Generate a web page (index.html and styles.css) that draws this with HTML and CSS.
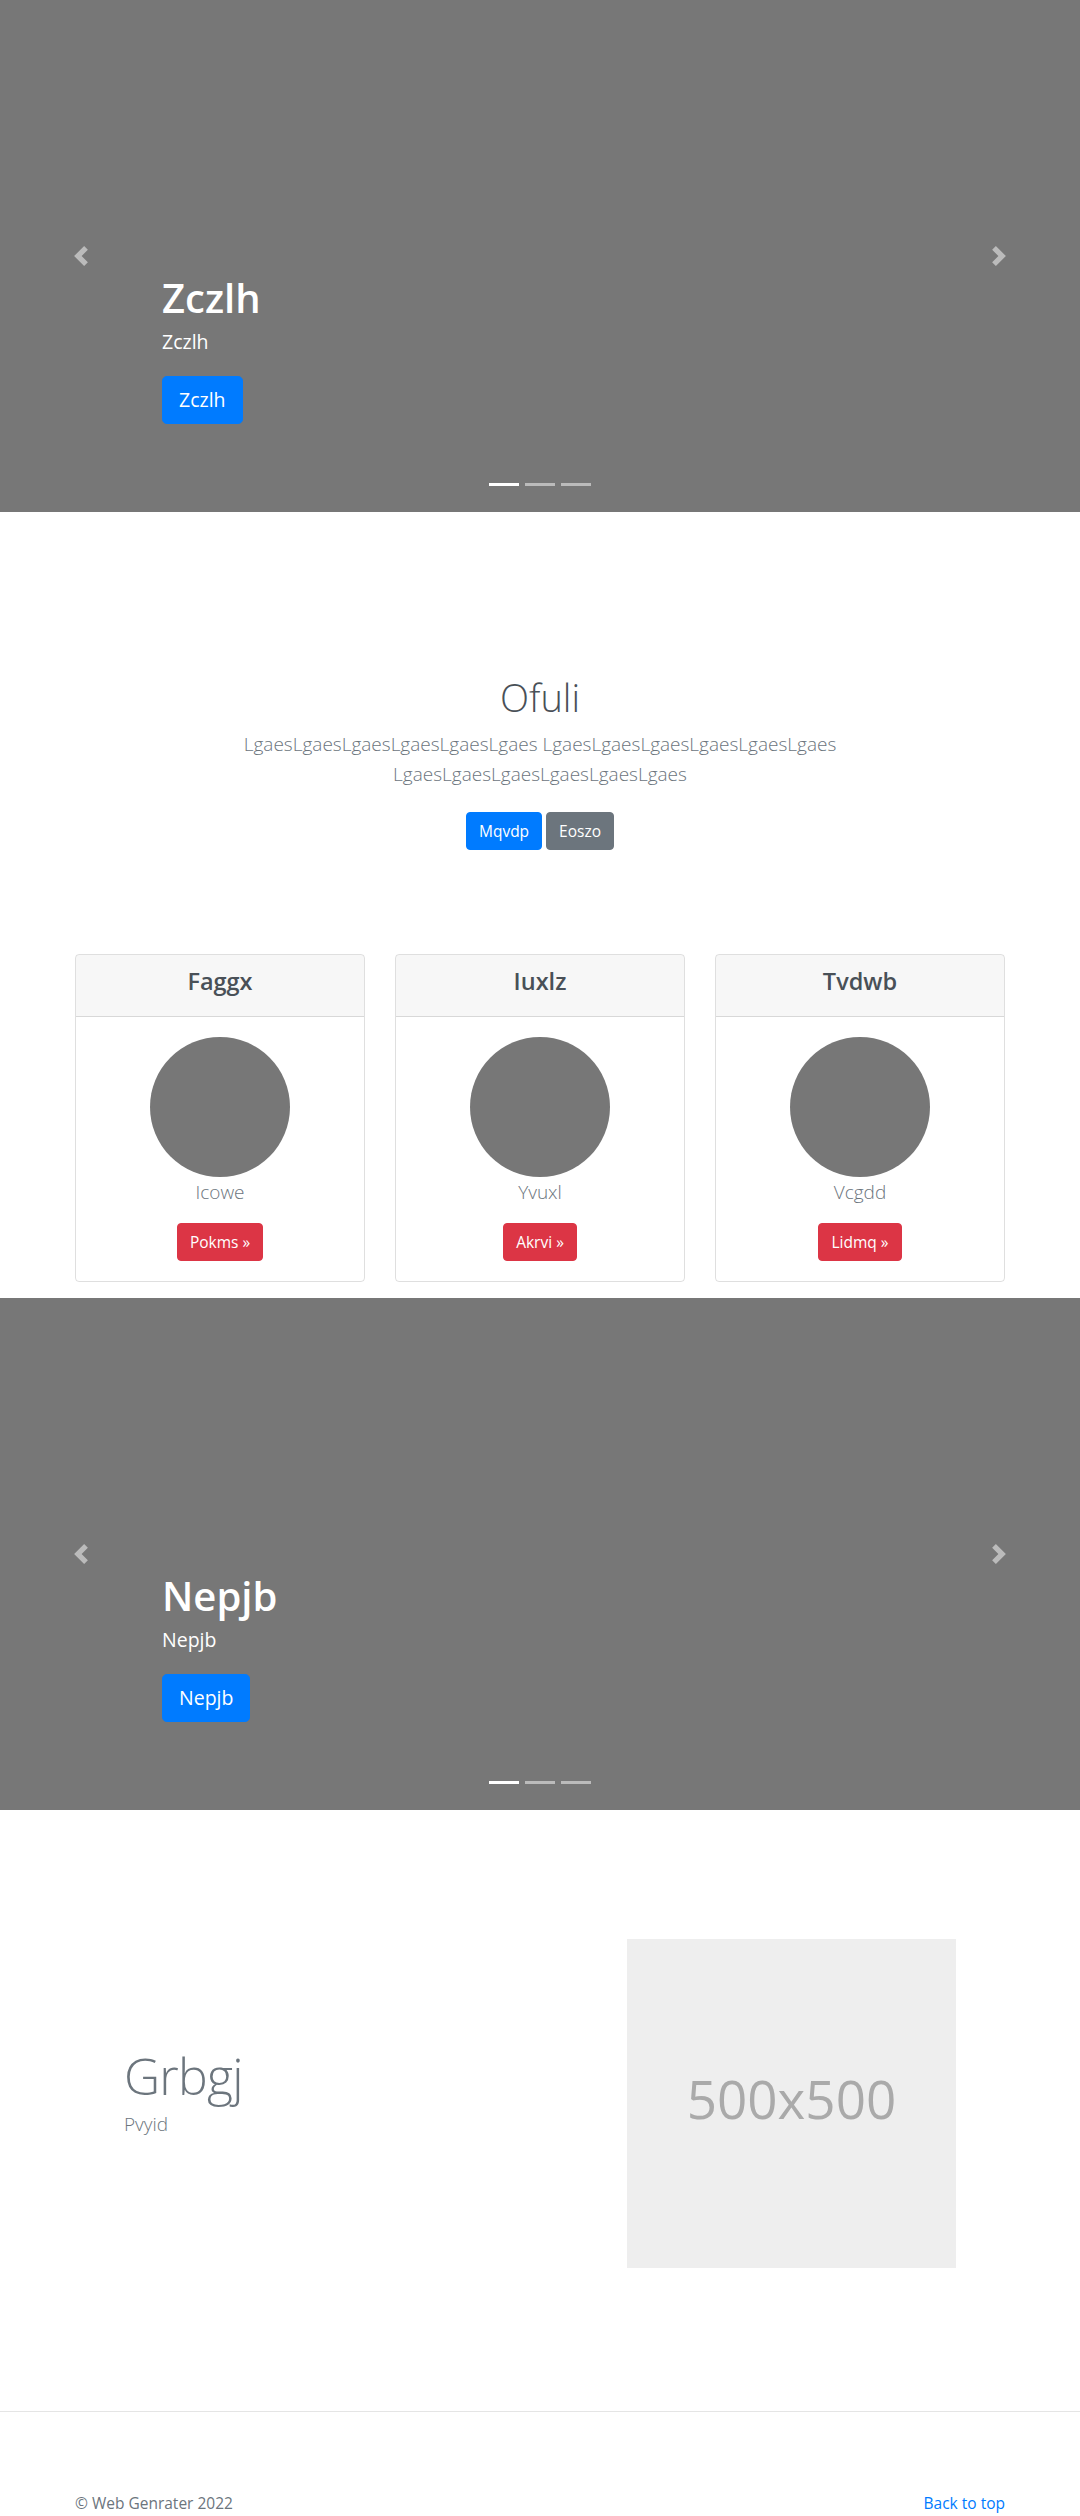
FILE: index.html
```html
<!DOCTYPE html>
<html lang="en">
<head>
<meta charset="utf-8">
<title>Web Genrater</title>
<link rel="stylesheet" href="styles.css">
</head>
<body>

<div class="carousel">
  <a class="ctrl ctrl-prev" href="#">
    <svg class="ctrl-icon" viewBox="0 0 8 8" width="20" height="20"><path fill="#fff" d="M5.25 0l-4 4 4 4 1.5-1.5-2.5-2.5 2.5-2.5-1.5-1.5z"/></svg>
  </a>
  <a class="ctrl ctrl-next" href="#">
    <svg class="ctrl-icon" viewBox="0 0 8 8" width="20" height="20"><path fill="#fff" d="M2.75 0l-1.5 1.5 2.5 2.5-2.5 2.5 1.5 1.5 4-4-4-4z"/></svg>
  </a>
  <div class="caption">
    <h1 class="caption-title">Zczlh</h1>
    <p class="caption-text">Zczlh</p>
    <a class="btn btn-lg btn-primary" href="#">Zczlh</a>
  </div>
  <ol class="indicators">
    <li class="active"></li>
    <li></li>
    <li></li>
  </ol>
</div>

<section class="jumbotron">
  <div class="jumbo-inner">
    <h1 class="jumbo-heading">Ofuli</h1>
    <p class="lead muted">LgaesLgaesLgaesLgaesLgaesLgaes LgaesLgaesLgaesLgaesLgaesLgaes LgaesLgaesLgaesLgaesLgaesLgaes</p>
    <div class="jumbo-actions">
      <a class="btn btn-primary" href="#">Mqvdp</a>
      <a class="btn btn-secondary" href="#">Eoszo</a>
    </div>
  </div>
</section>

<section class="cards">
  <div class="card">
    <div class="card-header"><h4 class="card-title">Faggx</h4></div>
    <div class="card-body">
      <div class="avatar"></div>
      <p class="lead muted card-name">Icowe</p>
      <a class="btn btn-danger" href="#">Pokms &raquo;</a>
    </div>
  </div>
  <div class="card">
    <div class="card-header"><h4 class="card-title">Iuxlz</h4></div>
    <div class="card-body">
      <div class="avatar"></div>
      <p class="lead muted card-name">Yvuxl</p>
      <a class="btn btn-danger" href="#">Akrvi &raquo;</a>
    </div>
  </div>
  <div class="card">
    <div class="card-header"><h4 class="card-title">Tvdwb</h4></div>
    <div class="card-body">
      <div class="avatar"></div>
      <p class="lead muted card-name">Vcgdd</p>
      <a class="btn btn-danger" href="#">Lidmq &raquo;</a>
    </div>
  </div>
</section>

<div class="carousel">
  <a class="ctrl ctrl-prev" href="#">
    <svg class="ctrl-icon" viewBox="0 0 8 8" width="20" height="20"><path fill="#fff" d="M5.25 0l-4 4 4 4 1.5-1.5-2.5-2.5 2.5-2.5-1.5-1.5z"/></svg>
  </a>
  <a class="ctrl ctrl-next" href="#">
    <svg class="ctrl-icon" viewBox="0 0 8 8" width="20" height="20"><path fill="#fff" d="M2.75 0l-1.5 1.5 2.5 2.5-2.5 2.5 1.5 1.5 4-4-4-4z"/></svg>
  </a>
  <div class="caption">
    <h1 class="caption-title">Nepjb</h1>
    <p class="caption-text">Nepjb</p>
    <a class="btn btn-lg btn-primary" href="#">Nepjb</a>
  </div>
  <ol class="indicators">
    <li class="active"></li>
    <li></li>
    <li></li>
  </ol>
</div>

<section class="featurette">
  <div class="featurette-text">
    <h2 class="featurette-heading">Grbgj</h2>
    <p class="lead muted">Pvyid</p>
  </div>
  <svg class="placeholder" width="329" height="329" viewBox="0 0 329 329">
    <rect width="100%" height="100%" fill="#eee"/>
    <text x="50%" y="50%" dy=".3em" text-anchor="middle" fill="#aaa">500x500</text>
  </svg>
</section>

<footer class="footer">
  <p class="copy">&copy; Web Genrater 2022</p>
  <a class="back" href="#">Back to top</a>
</footer>

</body>
</html>
```

FILE: styles.css
```css
* {
  box-sizing: border-box;
}

html, body {
  margin: 0;
  padding: 0;
}

body {
  font-family: "Open Sans", "Noto Sans", sans-serif;
  font-size: 16px;
  line-height: 1.5;
  color: #212529;
  background: #fff;
}

a {
  text-decoration: none;
}

/* Buttons */
.btn {
  display: inline-block;
  font-size: 15.5px;
  line-height: 24px;
  padding: 6px 12px;
  border: 1px solid transparent;
  border-radius: 4px;
  color: #fff;
  font-weight: 400;
}

.btn-lg {
  font-size: 19.5px;
  line-height: 30px;
  padding: 8px 16px;
  border-radius: 4.8px;
}

.btn-primary {
  background: #007bff;
  border-color: #007bff;
}

.btn-secondary {
  background: #6c757d;
  border-color: #6c757d;
}

.btn-danger {
  background: #dc3545;
  border-color: #dc3545;
}

/* Carousel */
.carousel {
  position: relative;
  height: 512px;
  background: #777;
  overflow: hidden;
}

.ctrl {
  position: absolute;
  top: 0;
  bottom: 0;
  width: 15%;
  display: flex;
  align-items: center;
  justify-content: center;
  opacity: 0.5;
}

.ctrl-prev {
  left: 0;
}

.ctrl-next {
  right: 0;
}

.ctrl-icon {
  display: block;
}

.caption {
  position: absolute;
  left: 15%;
  right: 15%;
  bottom: 88px;
  display: flex;
  flex-direction: column;
  align-items: flex-start;
  color: #fff;
}

.caption-title {
  margin: 0 0 5px;
  font-size: 40px;
  line-height: 48px;
  font-weight: 600;
}

.caption-text {
  margin: 0 0 19px;
  font-size: 19.5px;
  line-height: 30px;
}

.indicators {
  position: absolute;
  left: 0;
  right: 0;
  bottom: 26px;
  margin: 0;
  padding: 0;
  list-style: none;
  display: flex;
  justify-content: center;
}

.indicators li {
  width: 30px;
  height: 3px;
  margin: 0 3px;
  background: #fff;
  opacity: 0.5;
}

.indicators li.active {
  opacity: 1;
}

/* Jumbotron */
.jumbotron {
  padding: 161px 15px 0;
  text-align: center;
}

.jumbo-inner {
  max-width: 760px;
  margin: 0 auto;
}

.jumbo-heading {
  margin: 0 0 8px;
  font-size: 38px;
  line-height: 48px;
  font-weight: 300;
  color: #495057;
}

.lead {
  font-size: 19px;
  line-height: 30px;
  font-weight: 300;
  margin: 0 0 16px;
}

.muted {
  color: #6c757d;
}

.jumbo-actions {
  display: flex;
  justify-content: center;
  gap: 4px;
  padding-top: 7px;
}

/* Cards */
.cards {
  width: 960px;
  margin: 104px auto 16px;
  padding: 0 15px;
  display: grid;
  grid-template-columns: repeat(3, 1fr);
  gap: 30px;
}

.card {
  border: 1px solid rgba(0, 0, 0, 0.125);
  border-radius: 4px;
  overflow: hidden;
  text-align: center;
}

.card-header {
  padding: 12px 20px;
  background: rgba(0, 0, 0, 0.03);
  border-bottom: 1px solid rgba(0, 0, 0, 0.125);
}

.card-title {
  margin: 0 0 8px;
  font-size: 23.5px;
  line-height: 28.8px;
  font-weight: 600;
  color: #495057;
}

.card-body {
  padding: 20px;
  display: flex;
  flex-direction: column;
  align-items: center;
}

.avatar {
  width: 140px;
  height: 140px;
  border-radius: 50%;
  background: #777;
}

/* Featurette */
.featurette {
  display: flex;
  align-items: center;
  justify-content: space-between;
  padding: 129px 124px 143px;
}

.featurette-text {
  flex: 1;
}

.featurette-heading {
  margin: 0 0 8px;
  font-size: 50px;
  line-height: 1;
  font-weight: 300;
  letter-spacing: -0.8px;
  color: #6c757d;
}

.placeholder {
  display: block;
  flex: none;
}

.placeholder text {
  font-family: "Open Sans", "Noto Sans", sans-serif;
  font-size: 53px;
}

/* Footer */
.footer {
  border-top: 1px solid #e5e5e5;
  padding: 80px 75px 48px;
  display: flex;
  justify-content: space-between;
  align-items: flex-start;
}

.copy {
  margin: 0;
  font-size: 15.5px;
  color: #6c757d;
}

.back {
  font-size: 15.5px;
  color: #007bff;
}
```
